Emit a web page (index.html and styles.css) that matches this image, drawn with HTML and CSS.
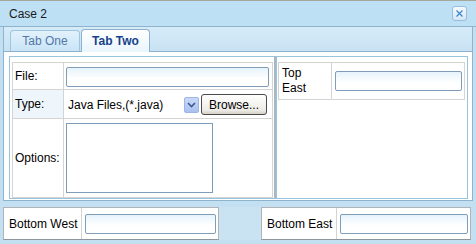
FILE: index.html
```html
<!DOCTYPE html>
<html lang="en">
<head>
    <meta charset="UTF-8">
    <title>Case 2</title>
    <link rel="stylesheet" href="styles.css">
</head>
<body>
    <div class="window">
        <div class="win-header">
            <span class="win-title">Case 2</span>
            <div class="close-btn">
                <svg width="7" height="7" viewBox="0 0 7 7"><path d="M0.5 0.5 L6.5 6.5 M6.5 0.5 L0.5 6.5" stroke="#3a86c8" stroke-width="1.2"/></svg>
            </div>
        </div>
        <div class="win-inner">
            <div class="tab-strip">
                <div class="tab">Tab One</div>
                <div class="tab active">Tab Two</div>
            </div>
            <div class="tab-body">
                <div class="form-panel">
                    <table class="form-table">
                        <tr class="row-file">
                            <td class="label">File:</td>
                            <td class="field"><input type="text" class="text-in file-in"></td>
                        </tr>
                        <tr class="row-type">
                            <td class="label hl">Type:</td>
                            <td class="field">
                                <div class="type-line">
                                    <div class="select-box">
                                        <span>Java Files,(*.java)</span>
                                        <span class="arrow">
                                            <svg width="9" height="6" viewBox="0 0 9 6"><path d="M1 1 L4.5 4.5 L8 1" stroke="#3d5a93" stroke-width="1.6" fill="none"/></svg>
                                        </span>
                                    </div>
                                    <button type="button" class="browse">Browse...</button>
                                </div>
                            </td>
                        </tr>
                        <tr class="row-options">
                            <td class="label">Options:</td>
                            <td class="field"><textarea class="options-in"></textarea></td>
                        </tr>
                    </table>
                </div>
                <div class="east-panel">
                    <table class="east-table">
                        <tr>
                            <td class="label">Top<br>East</td>
                            <td class="field"><input type="text" class="text-in east-in"></td>
                        </tr>
                    </table>
                </div>
            </div>
        </div>
        <div class="south">
            <div class="south-panel west">
                <div class="label">Bottom West</div>
                <div class="field"><input type="text" class="text-in"></div>
            </div>
            <div class="south-gap"></div>
            <div class="south-panel east">
                <div class="label">Bottom East</div>
                <div class="field"><input type="text" class="text-in"></div>
            </div>
        </div>
    </div>
</body>
</html>
```

FILE: styles.css
```css
body {
    margin: 0;
    padding: 0;
    font-family: "Liberation Sans", Arial, sans-serif;
    font-size: 12px;
    color: #000;
}
.window {
    width: 476px;
    height: 244px;
    box-sizing: border-box;
    background-color: #c3dff2;
    border-top: 1px solid #a4a898;
    overflow: hidden;
}
.win-header {
    height: 25px;
    display: flex;
    align-items: center;
    justify-content: space-between;
    padding: 0 9px 0 9px;
    background-color: #bee0f5;
    border-bottom: 1px solid #8db4cc;
}
.win-title {
    color: #1a1a1a;
    font-size: 12px;
}
.close-btn {
    width: 13px;
    height: 13px;
    border: 1px solid #9cbcd8;
    border-radius: 3px;
    background: linear-gradient(#f5faff, #d4e6f6);
    display: flex;
    align-items: center;
    justify-content: center;
}
.win-inner {
    margin: 0 3px;
    border-left: 1px solid #8db4cc;
    border-right: 1px solid #8db4cc;
    background-color: #fff;
}
.tab-strip {
    height: 24px;
    display: flex;
    align-items: flex-end;
    padding-left: 6px;
    background: linear-gradient(#d6ebf8, #c8e2f3);
    border-bottom: 1px solid #8db2d0;
}
.tab {
    width: 68px;
    height: 20px;
    line-height: 20px;
    text-align: center;
    margin-right: 1px;
    border: 1px solid #9fc4de;
    border-bottom: none;
    border-radius: 4px 4px 0 0;
    background: linear-gradient(#e3f2fc, #c8e4f6);
    color: #5578a8;
}
.tab.active {
    width: 67px;
    height: 22px;
    line-height: 22px;
    margin-bottom: -1px;
    background: linear-gradient(#ffffff, #eaf5fc);
    color: #15428b;
    font-weight: bold;
    border-color: #8db2d0;
}
.tab-body {
    display: flex;
    height: 143px;
    padding: 4px 4px 1px 5px;
    background-color: #fff;
    border-bottom: 1px solid #8db4cc;
}
.form-panel {
    width: 261px;
    padding: 5px 1px 0 2px;
    border: 1px solid #99c4de;
    border-right: 2px solid #a7b7c4;
}
.east-panel {
    flex: 1;
    padding: 5px 2px 0 1px;
    border: 1px solid #99c4de;
}
table {
    border-collapse: collapse;
    width: 100%;
}
.form-table {
    border: 1px solid #8aa8be;
    border-bottom-color: #b0b0b0;
}
.east-table {
    border: 1px solid #a6b2bc;
}
td {
    border: 1px solid #d4d4d4;
    padding: 0;
    vertical-align: middle;
}
.form-table .label {
    width: 48px;
    padding-left: 2px;
}
.label.hl {
    background-color: #eef6fc;
}
.field {
    padding: 3px 3px 2px 2px;
}
.row-file td {
    height: 21px;
}
.row-type td {
    height: 23px;
}
.text-in {
    display: block;
    box-sizing: border-box;
    width: 100%;
    height: 20px;
    margin: 0;
    border: 1px solid #7f9db9;
    border-radius: 2px;
    background: linear-gradient(#e6f3fb, #ffffff 60%);
    padding: 0 3px;
}
.type-line {
    display: flex;
    align-items: center;
}
.select-box {
    box-sizing: border-box;
    width: 133px;
    height: 18px;
    display: flex;
    align-items: center;
    justify-content: space-between;
    padding-left: 2px;
    font-size: 12px;
}
.arrow {
    width: 13px;
    height: 14px;
    border: 1px solid #9db4e6;
    background: linear-gradient(#c9d9f8, #aac0ef);
    display: flex;
    align-items: center;
    justify-content: center;
    border-radius: 2px;
}
.browse {
    box-sizing: border-box;
    width: 66px;
    height: 21px;
    margin-left: 2px;
    padding: 0;
    font-family: "Liberation Sans", Arial, sans-serif;
    font-size: 12px;
    color: #000;
    border: 1px solid #4a4a4a;
    border-radius: 3px;
    background: linear-gradient(#ffffff, #ecebe6 80%, #d6d0c5);
}
.row-options .field {
    vertical-align: top;
    padding-top: 4px;
}
.options-in {
    display: block;
    box-sizing: border-box;
    width: 147px;
    height: 70px;
    margin: 0;
    border: 1px solid #7f9db9;
    resize: none;
}
.row-options td {
    height: 72px;
}
.east-table .label {
    width: 49px;
    padding-left: 3px;
    line-height: 15px;
    height: 36px;
}
.east-table .field {
    padding: 3px 2px 3px 3px;
}
.south {
    display: flex;
    height: 33px;
    margin: 6px 5px 0 3px;
    background-color: #c9e3f3;
}
.south-panel {
    display: flex;
    align-items: center;
    background-color: #fff;
    border: 1px solid #b0b4b8;
    border-bottom-color: #8e959c;
}
.south-panel.west {
    width: 214px;
}
.south-panel.east {
    flex: 1;
}
.south-gap {
    width: 42px;
}
.south-panel .label {
    height: 100%;
    display: flex;
    align-items: center;
    padding: 0 4px 0 5px;
    border-right: 1px solid #d4d4d4;
}
.south-panel .field {
    flex: 1;
    padding: 0 2px 0 3px;
}
```
